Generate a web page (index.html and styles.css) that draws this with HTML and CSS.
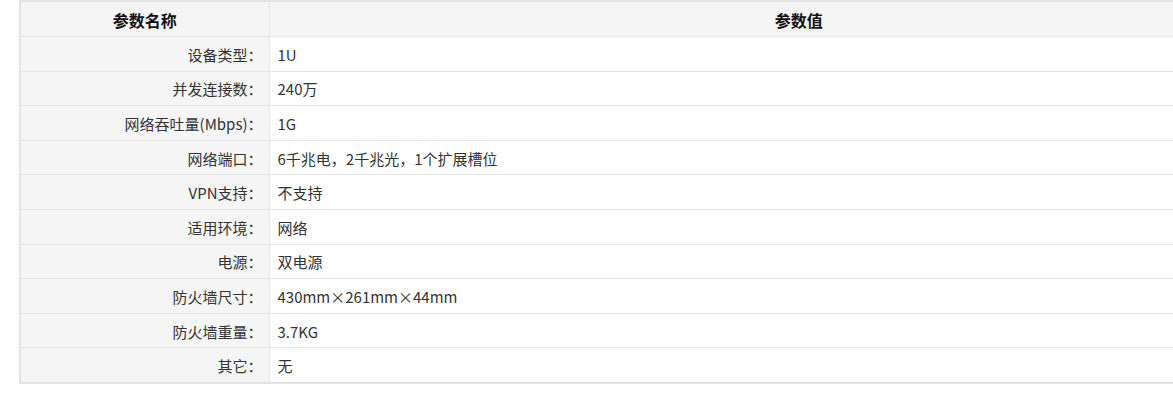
FILE: index.html
```html
<!DOCTYPE html>
<html lang="zh-CN">
<head>
    <meta charset="UTF-8">
    <title>参数</title>
    <link rel="stylesheet" href="styles.css">
</head>
<body>
    <div class="spec-wrap">
        <table class="spec-table">
            <thead>
                <tr>
                    <th class="col-name">参数名称</th>
                    <th>参数值</th>
                </tr>
            </thead>
            <tbody>
                <tr><td class="col-name">设备类型：</td><td>1U</td></tr>
                <tr><td class="col-name">并发连接数：</td><td>240万</td></tr>
                <tr><td class="col-name">网络吞吐量(Mbps)：</td><td>1G</td></tr>
                <tr><td class="col-name">网络端口：</td><td>6千兆电，2千兆光，1个扩展槽位</td></tr>
                <tr><td class="col-name">VPN支持：</td><td>不支持</td></tr>
                <tr><td class="col-name">适用环境：</td><td>网络</td></tr>
                <tr><td class="col-name">电源：</td><td>双电源</td></tr>
                <tr><td class="col-name">防火墙尺寸：</td><td>430mm×261mm×44mm</td></tr>
                <tr><td class="col-name">防火墙重量：</td><td>3.7KG</td></tr>
                <tr><td class="col-name">其它：</td><td>无</td></tr>
            </tbody>
        </table>
    </div>
</body>
</html>
```

FILE: styles.css
```css
body {
    margin: 0;
    padding: 0;
    background: #fff;
    font-family: "Noto Sans CJK TC", "Liberation Sans", sans-serif;
    font-size: 15px;
    color: #333;
    overflow: hidden;
    text-spacing-trim: space-all;
    font-feature-settings: "chws" 0, "halt" 0, "palt" 0;
}

.spec-wrap {
    padding-left: 19px;
    width: 1400px;
}

.spec-table {
    width: 1310px;
    border-collapse: collapse;
    border-top: 2px solid #e3e3e3;
    border-left: 2px solid #e3e3e3;
    border-bottom: 2px solid #e3e3e3;
}

.spec-table th,
.spec-table td {
    height: 34.6px;
    padding: 2px 8px 0;
    border: 1px solid #e6e6e6;
    line-height: 20px;
    box-sizing: border-box;
}

.spec-table th {
    height: 35.6px;
    background: #f5f5f5;
    font-size: 16px;
    font-weight: bold;
    color: #111;
    text-align: center;
}

.spec-table td {
    background: #fff;
    text-align: left;
}

.spec-table td.col-name {
    width: 249px;
    background: #f5f5f5;
    text-align: right;
    padding-right: 6px;
}

.spec-table th.col-name {
    width: 249px;
}
```
